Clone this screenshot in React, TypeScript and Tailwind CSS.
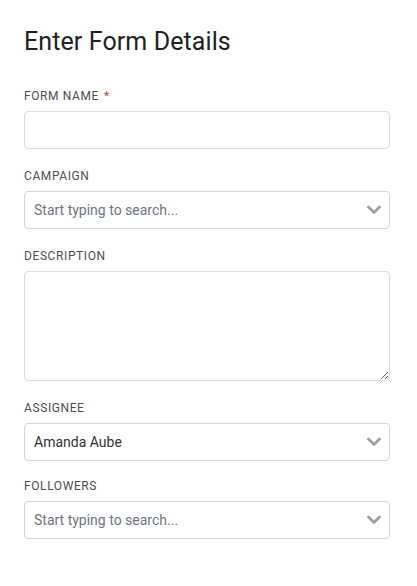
import React from "react";

function Chevron() {
  return (
    <svg width="14" height="10" viewBox="0 0 14 10" className="shrink-0">
      <path d="M1.5 2 L7 7.5 L12.5 2" fill="none" stroke="#a0a0a0" strokeWidth="2.8" strokeLinecap="round" strokeLinejoin="round" />
    </svg>
  );
}

function Label({ children, required }: { children: React.ReactNode; required?: boolean }) {
  return (
    <div className="text-[12px] leading-4 font-normal tracking-[0.6px] text-[#4f4f4f] mb-[7px]">
      {children}
      {required && <span className="text-[#e0342c] ml-[5px]">*</span>}
    </div>
  );
}

function Select({ value, placeholder }: { value?: string; placeholder?: string }) {
  return (
    <div className="h-[38px] w-full rounded-[4px] border border-[#d6d6d6] flex items-center pl-[9px] pr-[8px]">
      <span className={"flex-1 text-[14px] " + (value ? "text-[#333333]" : "text-[#6f7680]")}>
        {value ?? placeholder}
      </span>
      <Chevron />
    </div>
  );
}

export default function App() {
  return (
    <div className="w-[417px] h-[586px] bg-white" style={{ fontFamily: "Roboto, 'Liberation Sans', sans-serif" }}>
      <div className="pl-6 pr-[27px] pt-[26px]">
        <h1 className="text-[25px] tracking-[0.1px] leading-8 text-[#222222] font-normal mb-[30px]">Enter Form Details</h1>

        <Label required>FORM NAME</Label>
        <div className="h-[38px] w-full rounded-[4px] border border-[#dcdcdc]" />

        <div className="mt-[19px]">
          <Label>CAMPAIGN</Label>
          <Select placeholder="Start typing to search..." />
        </div>

        <div className="mt-[19px]">
          <Label>DESCRIPTION</Label>
          <textarea className="block h-[110px] w-full rounded-[4px] border border-[#dcdcdc] resize-y outline-none" />
        </div>

        <div className="mt-[19px]">
          <Label>ASSIGNEE</Label>
          <Select value="Amanda Aube" />
        </div>

        <div className="mt-[17px]">
          <Label>FOLLOWERS</Label>
          <Select placeholder="Start typing to search..." />
        </div>
      </div>
    </div>
  );
}
